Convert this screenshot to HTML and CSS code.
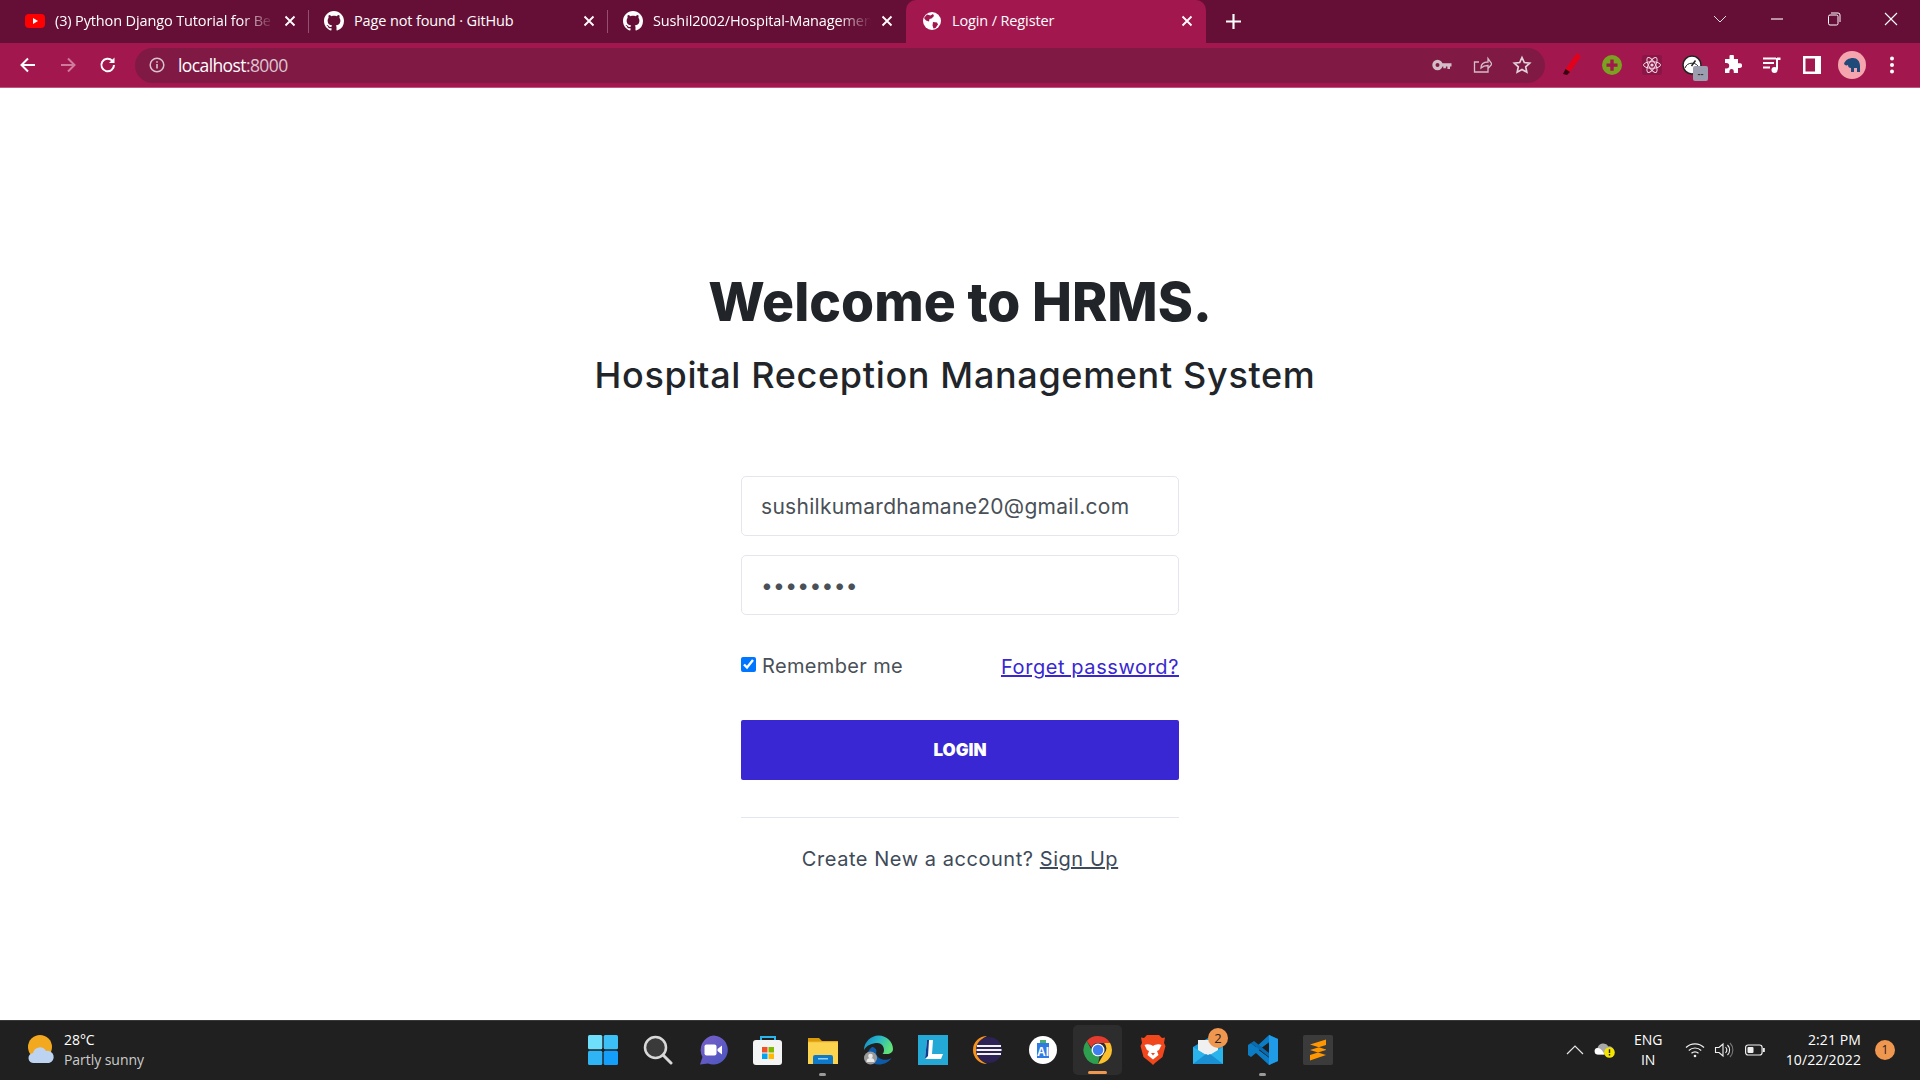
FILE: index.html
```html
<!DOCTYPE html>
<html lang="en">
<head>
<meta charset="utf-8">
<title>Login / Register</title>
<link rel="stylesheet" href="styles.css">
</head>
<body>
<svg class="defs" width="0" height="0" aria-hidden="true">
  <symbol id="gh" viewBox="0 0 16 16"><path fill="#fff" d="M8 0C3.58 0 0 3.58 0 8c0 3.54 2.29 6.53 5.47 7.59.4.07.55-.17.55-.38 0-.19-.01-.82-.01-1.49-2.01.37-2.53-.49-2.69-.94-.09-.23-.48-.94-.82-1.13-.28-.15-.68-.52-.01-.53.63-.01 1.08.58 1.23.82.72 1.21 1.87.87 2.33.66.07-.52.28-.87.51-1.07-1.78-.2-3.64-.89-3.64-3.95 0-.87.31-1.59.82-2.15-.08-.2-.36-1.02.08-2.12 0 0 .67-.21 2.2.82.64-.18 1.32-.27 2-.27.68 0 1.36.09 2 .27 1.53-1.04 2.2-.82 2.2-.82.44 1.1.16 1.92.08 2.12.51.56.82 1.27.82 2.15 0 3.07-1.87 3.75-3.65 3.95.29.25.54.73.54 1.48 0 1.07-.01 1.93-.01 2.2 0 .21.15.46.55.38A8.013 8.013 0 0016 8c0-4.42-3.58-8-8-8z"/></symbol>
  <symbol id="x" viewBox="0 0 12 12"><path d="M1.5 1.5l9 9M10.5 1.5l-9 9" stroke="#fff" stroke-width="1.8" fill="none"/></symbol>
  <linearGradient id="edgeTop" x1="0" y1="0" x2="1" y2="0.400"><stop offset="0" stop-color="#1483c6"/><stop offset=".5" stop-color="#27b5c9"/><stop offset="1" stop-color="#5ee07a"/></linearGradient>
  <linearGradient id="chatFill" x1="0" y1="0" x2="1" y2="1"><stop offset="0" stop-color="#7a5fc9"/><stop offset="1" stop-color="#4b56c0"/></linearGradient>
</svg>

<header class="tabstrip">
  <div class="tab sep">
    <svg class="fav" viewBox="0 0 20 20"><rect y="3" width="20" height="14" rx="4" fill="#f00"/><path d="M8 7l5 3-5 3z" fill="#fff"/></svg>
    <span class="tab-title fade">(3) Python Django Tutorial for Be</span>
    <svg class="close"><use href="#x"/></svg>
  </div>
  <div class="tab sep">
    <svg class="fav"><use href="#gh"/></svg>
    <span class="tab-title">Page not found · GitHub</span>
    <svg class="close"><use href="#x"/></svg>
  </div>
  <div class="tab">
    <svg class="fav"><use href="#gh"/></svg>
    <span class="tab-title fade">Sushil2002/Hospital-Managemen</span>
    <svg class="close"><use href="#x"/></svg>
  </div>
  <div class="tab active">
    <svg class="fav" viewBox="0 0 20 20"><circle cx="10" cy="10" r="9" fill="#fff"/><path d="M5 3.500l3.500 1 2.500-1.500 1 2-2.500 2.500-2 .5-.5 2.500-3-1-2-2.500zM11 11l4 .5 1 2-2.500 3.500-2 .5-1-3z" fill="#a3174f"/></svg>
    <span class="tab-title">Login / Register</span>
    <svg class="close"><use href="#x"/></svg>
  </div>
  <svg class="newtab" viewBox="0 0 14 14"><path d="M7 0v14M0 7h14" stroke="#fff" stroke-width="2"/></svg>
  <div class="winctl">
    <svg class="win" viewBox="0 0 14 14"><path d="M1 4l6 6 6-6" stroke="#ddd" fill="none"/></svg>
    <svg class="win" viewBox="0 0 14 14"><path d="M1 7h12" stroke="#fff" stroke-width="1.100"/></svg>
    <svg class="win" viewBox="0 0 14 14"><rect x="1.500" y="3" width="9.500" height="10" rx="1.500" stroke="#fff" fill="none"/><path d="M4 1h7a2 2 0 0 1 2 2v7" stroke="#fff" fill="none"/></svg>
    <svg class="win" viewBox="0 0 14 14"><path d="M1 1l12 12M13 1L1 13" stroke="#fff" stroke-width="1.100"/></svg>
  </div>
</header>

<nav class="toolbar">
  <div class="nav-btns">
    <svg class="tb" viewBox="0 0 20 20"><path d="M17 10H4M10 3.500L3.500 10l6.500 6.500" stroke="#fff" stroke-width="2" fill="none"/></svg>
    <svg class="tb" viewBox="0 0 20 20"><path d="M3 10h13M10 3.500l6.500 6.500-6.500 6.500" stroke="#d07a9c" stroke-width="2" fill="none"/></svg>
    <svg class="tb" viewBox="0 0 20 20"><path d="M16 10a6.300 6.300 0 1 1-1.800-4.400" stroke="#fff" stroke-width="2" fill="none"/><path d="M16.500 2.500v5.500H11z" fill="#fff"/></svg>
  </div>
  <div class="omnibox">
    <svg class="info" viewBox="0 0 16 16"><circle cx="8" cy="8" r="6.800" stroke="#d9c3cd" stroke-width="1.500" fill="none"/><path d="M8 7v4.500M8 4.200v1.600" stroke="#d9c3cd" stroke-width="1.600"/></svg>
    <span class="url">localhost<span class="port">:8000</span></span>
    <div class="omni-actions">
      <svg class="tb" viewBox="0 0 20 20"><circle cx="5.500" cy="10" r="3.600" stroke="#d3bdc7" stroke-width="3.200" fill="none"/><path d="M8 8.200h11.500v3.200H18v2.600h-2.600v-2.600h-1.500v1.800h-2.600v-1.800H8z" fill="#d3bdc7"/></svg>
      <svg class="tb" viewBox="0 0 20 20"><path d="M16 12v5H2.500V7H7M9 13c0-4 2.500-6 7-6V3.500l4 5.500-4 4.500v-3c-3 0-5 .5-7 2.500z" stroke="#d3bdc7" stroke-width="1.300" fill="none"/></svg>
      <svg class="tb" viewBox="0 0 20 20"><path d="M10 2.500l2.300 5 5.400.6-4 3.700 1.100 5.400-4.800-2.700-4.800 2.700 1.100-5.400-4-3.700 5.400-.6z" stroke="#e2d2d9" stroke-width="1.700" fill="none"/></svg>
    </div>
  </div>
  <div class="extensions">
    <svg class="tb mark" viewBox="0 0 20 24"><path d="M15 0l4 3.500L8 19l-4.500-3z" fill="#e3001b"/><path d="M3.500 16L8 19l-3 3-4-1z" fill="#3a0010"/></svg>
    <svg class="tb" viewBox="0 0 20 20"><circle cx="10" cy="10" r="10" fill="#7aa120"/><path d="M8.300 4.500h3.400v4h3.800v3.200h-3.800v4H8.300v-4H4.500V8.500h3.800z" fill="#a3174f"/></svg>
    <svg class="tb" viewBox="0 0 20 20"><rect width="20" height="20" rx="2" fill="#8a1647"/><g fill="none" stroke="#f2d6e2" stroke-width="1"><ellipse cx="10" cy="10" rx="8.500" ry="3.300"/><ellipse cx="10" cy="10" rx="8.500" ry="3.300" transform="rotate(60 10 10)"/><ellipse cx="10" cy="10" rx="8.500" ry="3.300" transform="rotate(120 10 10)"/></g><circle cx="10" cy="10" r="1.600" fill="#f2d6e2"/></svg>
    <div class="gauge">
      <svg class="tb" viewBox="0 0 20 20"><circle cx="10" cy="10" r="9" fill="#fff" stroke="#222" stroke-width="1.500"/><path d="M3 13a7.500 7.500 0 0 1 14 0" stroke="#222" stroke-width="1" fill="none"/><path d="M9.500 11l4-5.500" stroke="#222" stroke-width="1.500"/></svg>
      <span class="badge">--</span>
    </div>
    <svg class="tb" viewBox="0 0 20 20"><path d="M7.500 1.500a2.200 2.200 0 0 1 4.400 0V4H16v4.300h1.800a2.300 2.300 0 0 1 0 4.600H16V18H11.800v-1.800a2.200 2.200 0 0 0-4.400 0V18H3v-4.500h1.500a2.700 2.700 0 0 0 0-5.400H3V4h4.500z" fill="#fff"/></svg>
    <svg class="tb" viewBox="0 0 20 20"><path d="M1 3.500h13M1 8h11M1 12.500h7" stroke="#fff" stroke-width="2"/><path d="M15 3v11.500" stroke="#fff" stroke-width="2"/><path d="M15 2.500h3.500v2.500H15z" fill="#fff"/><circle cx="12.500" cy="15" r="3" fill="#fff"/></svg>
    <svg class="tb" viewBox="0 0 20 20"><rect x="1" y="1" width="18" height="18" fill="#fff"/><rect x="3.500" y="3.500" width="9.500" height="13" fill="#a3174f"/></svg>
    <svg class="avatar" viewBox="0 0 28 28"><circle cx="14" cy="14" r="14" fill="#f5a5ad"/><path d="M6 13c1-4 5-6 9-6s7 3 7 8v6h-3v-4h-3v4h-3v-4c-2 0-3-1-3-3-2 1-3 0-4-1z" fill="#1f4a7a"/></svg>
    <svg class="tb" viewBox="0 0 20 20"><circle cx="10" cy="3.500" r="2" fill="#fff"/><circle cx="10" cy="10" r="2" fill="#fff"/><circle cx="10" cy="16.500" r="2" fill="#fff"/></svg>
  </div>
</nav>

<main class="page">
  <h1 class="title">Welcome to HRMS.</h1>
  <h2 class="subtitle">Hospital Reception Management System</h2>
  <form class="login">
    <input class="field" type="email" value="sushilkumardhamane20@gmail.com">
    <input class="field" type="password" value="password">
    <div class="options">
      <label class="remember"><input class="check" type="checkbox" checked>Remember me</label>
      <a class="forgot" href="#">Forget password?</a>
    </div>
    <button class="submit" type="button">LOGIN</button>
    <hr class="rule">
    <p class="signup">Create New a account? <a href="#">Sign Up</a></p>
  </form>
</main>

<footer class="taskbar">
  <div class="weather">
    <svg class="weather-icon" viewBox="0 0 28 30"><circle cx="13" cy="12" r="12" fill="#f2a81f"/><path d="M7 28a5 5 0 0 1-1-10 7 7 0 0 1 13-2 6 6 0 0 1 3 12z" fill="#bcd3f2"/></svg>
    <div class="weather-text"><span class="temp">28°C</span><span class="cond">Partly sunny</span></div>
  </div>
  <div class="apps">
    <div class="app"><svg viewBox="0 0 30 30"><rect width="14.300" height="14.300" rx="1.500" fill="#6fe0fb"/><rect x="15.700" width="14.300" height="14.300" rx="1.500" fill="#3cc0f6"/><rect y="15.700" width="14.300" height="14.300" rx="1.500" fill="#2fb5f5"/><rect x="15.700" y="15.700" width="14.300" height="14.300" rx="1.500" fill="#14a0fa"/></svg></div>
    <div class="app"><svg viewBox="0 0 30 30"><circle cx="12.500" cy="12.500" r="10.500" fill="#3a3a3a" stroke="#d8d8d8" stroke-width="2.500"/><path d="M20 20l8 8" stroke="#d8d8d8" stroke-width="3" stroke-linecap="round"/></svg></div>
    <div class="app"><svg viewBox="0 0 30 30"><path d="M15.500 0.500a14.500 14.500 0 1 1-5.500 28l-8 1 2.500-7.500A14.500 14.500 0 0 1 15.500 .5z" fill="url(#chatFill)"/><rect x="6.500" y="9.500" width="12" height="11" rx="2" fill="#fff"/><path d="M19.500 14l4.500-3.500v9L19.500 16z" fill="#fff"/></svg></div>
    <div class="app"><svg viewBox="0 0 30 30"><path d="M8 7V2h14v5" stroke="#2bb5ee" stroke-width="2" fill="none"/><rect y="5" width="29" height="25" rx="3" fill="#f4f4f4"/><rect x="9" y="12" width="5.500" height="5.500" fill="#f25022"/><rect x="15.500" y="12" width="5.500" height="5.500" fill="#7fba00"/><rect x="9" y="18.500" width="5.500" height="5.500" fill="#00a4ef"/><rect x="15.500" y="18.500" width="5.500" height="5.500" fill="#ffb900"/></svg></div>
    <div class="app running"><svg viewBox="0 0 30 30"><path d="M0 3h11l3 3v6H0z" fill="#d99a0b"/><rect y="6" width="30" height="23" fill="#fcd34f"/><rect y="6" width="30" height="1.200" fill="#e8a81a"/><path d="M5 22a2 2 0 0 1 2-2h16a2 2 0 0 1 2 2v7H5z" fill="#0f79c9"/><rect x="10" y="23" width="10" height="1.500" fill="#8fd0ff"/></svg></div>
    <div class="app"><svg viewBox="0 0 30 30"><path d="M1 15C1 7 8 0.500 15.500 0.500 24 0.500 30 7 30 14c0 3.500-3 5-6 5h-4.500c1-1 1.500-2.500 1.500-4 0-4-3-7-6.500-7C9 8 4 10 1 15z" fill="url(#edgeTop)"/><path d="M9 12c-3 2-4.500 5-4.500 8 0 5 5 9.500 11 9.500 6 0 10.500-2.500 13-6.500-3 2-8 2.500-11.500 .5-3-2-4.500-4.500-3.500-8-1-2.500-3-4-4.500-3.500z" fill="#0c5aa8"/><circle cx="7.500" cy="23" r="6.500" fill="#9a9a9a"/><circle cx="7.500" cy="21" r="2.300" fill="#e9e9e9"/><path d="M3.500 27a4 4 0 0 1 8 0z" fill="#e9e9e9"/></svg></div>
    <div class="app"><svg viewBox="0 0 30 30"><rect width="30" height="30" fill="#24a9d6"/><path d="M9 5h6l-1 14h11l-2 5H7z" fill="#fff"/><path d="M9 5l-2 19 3-3 1-16z" fill="#0b3d91"/></svg></div>
    <div class="app"><svg viewBox="0 0 30 30"><path d="M14 1A14 14 0 0 0 14 29 15 15 0 0 1 14 1z" fill="#f7941e"/><circle cx="16" cy="15" r="13" fill="#2c2255"/><path d="M4 11h24M3.500 15h25M4 19h24" stroke="#f2f2f2" stroke-width="2"/></svg></div>
    <div class="app"><svg viewBox="0 0 30 30"><circle cx="15" cy="15" r="14" fill="#fff"/><path d="M9 8h12v15H9z" fill="#2f7be3"/><path d="M12 5h6v3h-6z" fill="#4caf72"/><text class="ai" x="15" y="21">AI</text></svg></div>
    <div class="app active running"><svg viewBox="0 0 30 30"><path d="M15 1a14 14 0 0 1 12.100 7H15a7 7 0 0 0-6.600 4.600L3.800 6A14 14 0 0 1 15 1z" fill="#e33b2e"/><path d="M27.100 8A14 14 0 0 1 15 29l6.100-10.500A7 7 0 0 0 21 8z" fill="#fbc02d"/><path d="M15 29A14 14 0 0 1 3.800 6L10 17.500a7 7 0 0 0 6.500 4.300z" fill="#2e9e4f"/><circle cx="15" cy="15" r="6.500" fill="#fff"/><circle cx="15" cy="15" r="5.200" fill="#3f7ff0"/></svg></div>
    <div class="app"><svg viewBox="0 0 30 30"><path d="M9 0H21L24 3L27 2.500L26 8L27.500 11L24.500 22L17 28L15 30L13 28L5.500 22L2.500 11L4 8L3 2.500L6 3Z" fill="#f1471d"/><path d="M6.500 10C10 8.500 13 10 15 11 17 10 20 8.500 23.500 10L21 15L19 16L20.500 20L15 24.500 9.500 20 11 16 9 15Z" fill="#fff"/><path d="M13 18h4l-2 2.500z" fill="#f1471d"/></svg></div>
    <div class="app"><svg viewBox="0 0 30 30"><path d="M0 12L15 3l15 9v17H0z" fill="#1d9bd8"/><path d="M5 5h20v11l-10 6L5 16z" fill="#f0f0f0"/><path d="M0 12l15 9 15-9v17H0z" fill="#2ab4ec"/><path d="M0 29l13-10 2 1 2-1 13 10z" fill="#1a8fd1"/></svg><span class="app-badge">2</span></div>
    <div class="app running"><svg viewBox="0 0 30 30"><path d="M21 0l9 4v22l-9 4L8 18l-5 4-3-2v-10l3-2 5 4z" fill="#0c7cc4"/><path d="M21 7.500v15L11 15z" fill="#1e1e1e"/><path d="M21 0l9 4v22l-9 4z" fill="#1f9be8"/><path d="M21 7.500v15L11 15z" fill="#1e1e1e"/><path d="M3 8l18 14v-4L6 6z" fill="#0a6cb0"/></svg></div>
    <div class="app"><svg viewBox="0 0 30 30"><rect width="30" height="30" rx="2" fill="#3b3b3b"/><path d="M23 4.500v5.500L7 15v-5.500zM7 15l16 5v-5.500L7 9.500zM23 20L7 25.500V20l16-5z" fill="#ff9800"/></svg></div>
  </div>
  <div class="tray">
    <svg class="chev" viewBox="0 0 18 10"><path d="M1 9l8-8 8 8" stroke="#e5e5e5" stroke-width="1.200" fill="none"/></svg>
    <svg class="cloud" viewBox="0 0 21 16"><path d="M4 12.500a3.200 3.200 0 0 1-.5-6.400 6 6 0 0 1 11-1.600 4 4 0 0 1 2 8z" fill="#a8a8a8"/><path d="M4 12.500a3.200 3.200 0 0 1 0-6.400c2.500 0 5 3 6.500 6.400z" fill="#fff"/><circle cx="15.500" cy="10.500" r="5.300" fill="#f5e400"/><path d="M15.500 7.300v3.700M15.500 12v1.600" stroke="#222" stroke-width="1.400"/></svg>
    <div class="lang"><span>ENG</span><span>IN</span></div>
    <svg class="wifi" viewBox="0 0 20 16"><path d="M1 5.500a13 13 0 0 1 18 0M3.800 8.500a9 9 0 0 1 12.400 0M6.500 11.300a5 5 0 0 1 7 0" stroke="#f0f0f0" stroke-width="1.200" fill="none"/><circle cx="10" cy="14" r="1.300" fill="#f0f0f0"/></svg>
    <svg class="vol" viewBox="0 0 20 16"><path d="M1.500 5.500h3.500l4-3.500v12l-4-3.500H1.500z" stroke="#f0f0f0" stroke-width="1.100" fill="none"/><path d="M11.500 5a4.500 4.500 0 0 1 0 6M13.500 3a7 7 0 0 1 0 10" stroke="#f0f0f0" stroke-width="1.100" fill="none"/><path d="M16 1a10 10 0 0 1 0 14" stroke="#777" stroke-width="1.100" fill="none"/></svg>
    <svg class="batt" viewBox="0 0 20 12"><rect x=".6" y="1" width="16.500" height="10" rx="2.500" stroke="#f0f0f0" stroke-width="1.200" fill="none"/><rect x="2.500" y="3" width="6" height="6" rx="1" fill="#f0f0f0"/><rect x="18" y="4" width="1.800" height="4" fill="#f0f0f0"/></svg>
    <div class="clock"><span>2:21 PM</span><span>10/22/2022</span></div>
    <span class="notif">1</span>
  </div>
</footer>
</body>
</html>
```

FILE: styles.css
```css
* { box-sizing: border-box; }
html, body { margin: 0; height: 100%; }
body {
  width: 1920px;
  height: 1080px;
  overflow: hidden;
  display: flex;
  flex-direction: column;
  background: #fff;
  font-family: "Inter", "Liberation Sans", sans-serif;
}
.defs { position: absolute; }

/* browser tab strip */
.tabstrip {
  flex: 0 0 43px;
  display: flex;
  align-items: stretch;
  padding-left: 9px;
  background: #660f36;
  color: #fff;
}
.tab {
  width: 299px;
  display: flex;
  align-items: center;
  gap: 10px;
  padding: 0 13px 1px 16px;
  position: relative;
  font: 14.5px/20px "Open Sans", "Noto Sans", sans-serif;
  letter-spacing: -.13px;
}
.tab.sep { padding-right: 12px; }
.tab.sep::after {
  content: "";
  position: absolute;
  right: -1px;
  top: 10px;
  height: 23px;
  width: 1px;
  background: #94516f;
}
.tab.active {
  width: 300px;
  background: #a3174f;
  border-radius: 10px 10px 0 0;
}
.fav { width: 20px; height: 20px; flex: none; }
.tab-title { flex: 1; min-width: 0; white-space: nowrap; }
.fade { -webkit-mask-image: linear-gradient(90deg, #000 85%, transparent 100%); mask-image: linear-gradient(90deg, #000 85%, transparent 100%); }
.close { width: 12px; height: 12px; flex: none; }
.newtab { width: 15px; height: 15px; align-self: center; margin-left: 20px; }
.winctl { margin-left: auto; display: flex; align-items: center; gap: 43px; padding: 0 22px 6px 0; }
.win { width: 14px; height: 14px; }

/* toolbar */
.toolbar {
  flex: 0 0 45px;
  display: flex;
  align-items: center;
  padding-left: 18px;
  background: #a3174f;
  border-bottom: 1px solid #c2557f;
}
.nav-btns { display: flex; gap: 20px; width: 117px; }
.tb { width: 20px; height: 20px; flex: none; }
.tb.mark { width: 20px; height: 24px; }
.omnibox {
  width: 1410px;
  height: 35px;
  display: flex;
  align-items: center;
  padding: 0 13px 0 14px;
  border-radius: 18px;
  background: #801a45;
}
.info { width: 16px; height: 16px; }
.url { margin-left: 13px; font: 17.5px/24px "Open Sans", sans-serif; letter-spacing: -.6px; color: #fff; }
.port { color: #dcc5cf; }
.omni-actions { margin-left: auto; display: flex; gap: 20px; }
.extensions { display: flex; align-items: center; gap: 20px; margin-left: 17px; }
.gauge { display: flex; position: relative; }
.badge {
  position: absolute;
  left: 11px;
  top: 11px;
  width: 15px;
  height: 15px;
  border-radius: 2px;
  background: #9d9db0;
  color: #333;
  font: 700 9px/17px "Liberation Sans", sans-serif;
  text-align: center;
}
.avatar { width: 28px; height: 28px; margin: 0 -4px; flex: none; }

/* page */
.page {
  flex: 1;
  min-height: 0;
  display: flex;
  flex-direction: column;
  align-items: center;
  padding-top: 180px;
}
.title {
  margin: 0;
  font-size: 53.4px;
  line-height: 67px;
  font-weight: 800;
  color: #212529;
}
.subtitle {
  margin: 19px 10px 0 0;
  font-size: 36px;
  line-height: 43px;
  font-weight: 500;
  letter-spacing: .66px;
  color: #212529;
}
.login { width: 438px; margin-top: 79px; display: flex; flex-direction: column; }
.field {
  height: 60px;
  margin-bottom: 19px;
  padding: 0 19px;
  border: 1px solid #e4e6ef;
  border-radius: 5px;
  background: #fff;
  outline: none;
  font: 400 21px "Inter", sans-serif;
  letter-spacing: .3px;
  color: #495057;
}
.options {
  display: flex;
  justify-content: space-between;
  align-items: center;
  margin-top: 17px;
  height: 30px;
  font-size: 20px;
}
.remember { display: flex; align-items: center; color: #495057; letter-spacing: .35px; }
.check { width: 15px; height: 15px; margin: 0 6px 4px 0; }
.forgot { color: #3827d2; font-size: 20px; letter-spacing: .58px; padding-top: 2px; }
.submit {
  height: 60px;
  margin-top: 39px;
  border: 0;
  border-radius: 2px;
  background: #3827d2;
  color: #fff;
  font: 900 17px "Inter", sans-serif;
}
.rule { width: 100%; height: 1px; margin: 37px 0 0; border: 0; background: #e4e6ef; }
.signup { margin: 27px 0 0; text-align: center; font-size: 20px; line-height: 28px; letter-spacing: .55px; color: #3e4a59; }
.signup a { color: #3e4a59; }

/* taskbar */
.taskbar {
  flex: 0 0 60px;
  display: grid;
  grid-template-columns: 1fr auto 1fr;
  align-items: center;
  padding-bottom: 2px;
  background: #202020;
  border-top: 1px solid #383838;
  color: #fff;
  font-family: "Open Sans", "Noto Sans", sans-serif;
}
.weather { display: flex; align-items: center; gap: 9px; padding-left: 27px; }
.weather-icon { width: 28px; height: 30px; }
.weather-text { display: flex; flex-direction: column; font-size: 14px; line-height: 20px; letter-spacing: -.05px; }
.cond { color: #ccc; }
.apps { display: flex; }
.app {
  position: relative;
  width: 55px;
  height: 50px;
  display: flex;
  align-items: center;
  justify-content: center;
}
.app svg { width: 30px; height: 30px; }
.ai { font: 700 12px "Liberation Sans", sans-serif; fill: #fff; text-anchor: middle; }
.app.running::after {
  content: "";
  position: absolute;
  left: 24px;
  bottom: -1px;
  width: 7px;
  height: 3px;
  border-radius: 2px;
  background: #9a9a9a;
}
.app.active { background: #2d2d2d; border-radius: 5px; margin: 0 3px; width: 49px; }
.app.active::after { left: 15px; width: 19px; height: 3px; bottom: 1px; background: #f0974f; }
.app-badge {
  position: absolute;
  left: 28px;
  top: 3px;
  width: 20px;
  height: 20px;
  border-radius: 50%;
  background: #f0974f;
  color: #222;
  font-size: 13px;
  line-height: 20px;
  text-align: center;
}
.tray { display: flex; align-items: center; justify-content: flex-end; padding-right: 25px; font-size: 14px; }
.chev { width: 18px; height: 10px; }
.cloud { width: 21px; height: 16px; margin-left: 10px; }
.lang { display: flex; flex-direction: column; align-items: center; width: 32px; margin-left: 17px; line-height: 20px; }
.wifi { width: 20px; height: 16px; margin-left: 21px; }
.vol { width: 20px; height: 16px; margin-left: 9px; }
.batt { width: 20px; height: 12px; margin-left: 11px; }
.clock { display: flex; flex-direction: column; align-items: flex-end; margin-left: 20.5px; line-height: 20px; letter-spacing: .1px; }
.notif {
  width: 20px;
  height: 20px;
  margin-left: 14px;
  border-radius: 50%;
  background: #f0974f;
  color: #222;
  font-size: 12px;
  line-height: 20px;
  text-align: center;
}
```
